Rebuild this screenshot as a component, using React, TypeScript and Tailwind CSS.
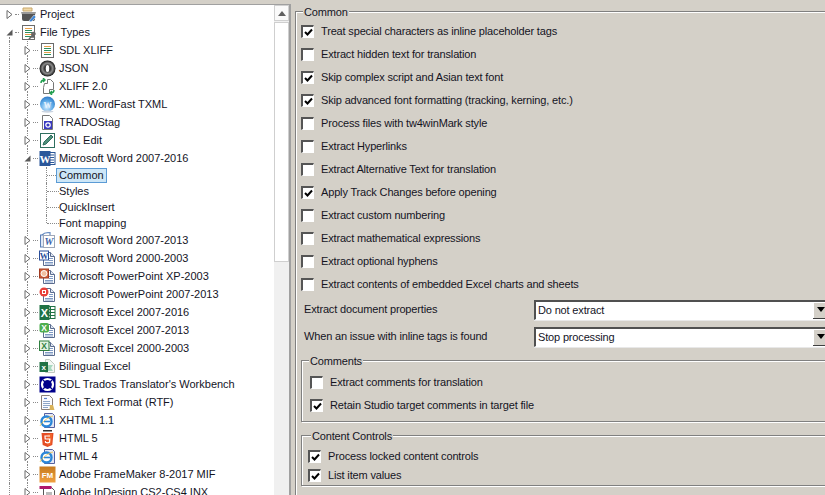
import type { ReactNode } from 'react';

const ink = '#14141f';

function Svg({ children }: { children: ReactNode }) {
  return (
    <svg width="17" height="17" viewBox="0 0 17 17" className="shrink-0">
      {children}
    </svg>
  );
}

// page with a folded corner and some text lines
function Page({ x = 4, lines = '#7f9ac4' }: { x?: number; lines?: string }) {
  return (
    <g>
      <path d={`M${x + 0.5} 2.5h7l4 4v9h-11z`} fill="#fff" stroke="#5b6c8f" />
      <path d={`M${x + 7.5} 2.5v4h4`} fill="#dfe6f2" stroke="#5b6c8f" />
      <path d={`M${x + 6} 8.5h4M${x + 6} 10.5h4M${x + 2} 12.5h8M${x + 2} 14h8`} stroke={lines} />
    </g>
  );
}

function Letter({ x, y, size, fill, children, italic }: { x: number; y: number; size: number; fill: string; children: string; italic?: boolean }) {
  return (
    <text x={x} y={y} fontSize={size} fontWeight="700" fontStyle={italic ? 'italic' : 'normal'} fontFamily="'Liberation Serif', serif" fill={fill} textAnchor="middle">
      {children}
    </text>
  );
}

function ListDoc() {
  return (
    <>
      <rect x="2.5" y="1.5" width="12" height="14" fill="#fff" stroke="#6b6b6b" />
      <path d="M5 4.5h7M5 10.5h7" stroke="#e8a04a" />
      <path d="M5 6.5h7M5 8.5h7M5 12.5h7" stroke="#2f8f5f" />
    </>
  );
}

const icons: Record<string, ReactNode> = {
  project: (
    <>
      <path d="M3 2h9v3H3z" fill="#f0d9a8" stroke="#c9a86a" />
      <path d="M1 6h15l-1 3H2z" fill="#9a9a9a" />
      <path d="M2 8h13v5a2 2 0 0 1-2 2H4a2 2 0 0 1-2-2z" fill="#555" />
      <path d="M9 15l5-6 2 2-5 5z" fill="#3f86d6" stroke="#fff" strokeWidth="0.5" />
    </>
  ),
  types: (
    <>
      <ListDoc />
      <path d="M9 15l4-4M12 9c2-1 3 0 3 1l-2 1 1 2-2 0z" stroke="#666" strokeWidth="1.6" fill="#888" />
    </>
  ),
  xliff: <ListDoc />,
  json: (
    <>
      <defs>
        <radialGradient id="jsonRing" cx="0.5" cy="0.5" r="0.5">
          <stop offset="0.3" stopColor="#222" />
          <stop offset="0.65" stopColor="#8d8d8d" />
          <stop offset="1" stopColor="#111" />
        </radialGradient>
      </defs>
      <circle cx="8.5" cy="8.5" r="8" fill="url(#jsonRing)" />
      <ellipse cx="8.5" cy="8.5" rx="1.8" ry="3.6" fill="#fff" />
    </>
  ),
  xliff2: (
    <>
      <path d="M5.5 5.5h3v-4h3l3 3v7h-4v4h-6v-6z" fill="#fff" stroke="#777" />
      <path d="M2 5c0-2 1-3 3-3M4 0l2 2-2 2M15 12c0 2-1 3-3 3M13 17l-2-2 2-2" stroke="#1f9d4d" strokeWidth="1.4" fill="none" />
    </>
  ),
  globe: (
    <>
      <defs>
        <radialGradient id="globeFill" cx="0.45" cy="0.7" r="0.7">
          <stop offset="0" stopColor="#d8efff" />
          <stop offset="0.6" stopColor="#5aa8e6" />
          <stop offset="1" stopColor="#2e78c4" />
        </radialGradient>
      </defs>
      <circle cx="8.5" cy="8" r="7.5" fill="url(#globeFill)" />
      <ellipse cx="8.5" cy="15.5" rx="6" ry="1.2" fill="#c9d3e0" />
      <Letter x={8.5} y={12} size={8} fill="#e8f4ff">W</Letter>
    </>
  ),
  tag: (
    <>
      <path d="M3.5 1.5h7l3 3v11h-10z" fill="#fff" stroke="#777" />
      <rect x="5" y="7" width="8" height="8" fill="#3a3ac0" />
      <circle cx="9" cy="11" r="2.2" fill="none" stroke="#fff" strokeWidth="1.2" />
    </>
  ),
  edit: (
    <>
      <rect x="1.5" y="1.5" width="14" height="14" fill="#fff" stroke="#2f6f5f" />
      <path d="M4 13l1-3 7-7 2 2-7 7z" fill="#4f8f7a" stroke="#2f6f5f" />
    </>
  ),
  word16: (
    <>
      <rect x="7" y="2.5" width="9" height="12" fill="#fff" stroke="#2b5797" />
      <path d="M10 5h5M10 7.5h5M10 10h5M10 12.5h5" stroke="#2b5797" />
      <rect x="0.5" y="1" width="11" height="15" fill="#2b579a" />
      <Letter x={6} y={12.5} size={11} fill="#fff">W</Letter>
    </>
  ),
  word13: (
    <>
      <path d="M3 3c2-2 5-2.5 8-2.5v3" fill="none" stroke="#6b8fc4" strokeWidth="1.2" />
      <rect x="1.5" y="3" width="3" height="12" fill="#dfe8f6" stroke="#5a7fb8" />
      <rect x="4.5" y="3.5" width="11" height="12" fill="#fff" stroke="#a0a8b8" />
      <Letter x={10} y={13} size={10} fill="#3a5fa8" italic>W</Letter>
    </>
  ),
  word03: (
    <>
      <Page x={4} />
      <rect x="0.5" y="1" width="9" height="9" fill="#fff" stroke="#2b4f9a" />
      <Letter x={5} y={8.5} size={8.5} fill="#2b4f9a">W</Letter>
    </>
  ),
  ppt03: (
    <>
      <Page x={4} />
      <rect x="0.5" y="1" width="9" height="9" fill="#d0603a" stroke="#a03a20" />
      <circle cx="5" cy="5.5" r="3" fill="#f2c0a0" stroke="#fff" />
    </>
  ),
  ppt07: (
    <>
      <Page x={4} />
      <circle cx="5" cy="6" r="4.5" fill="#e8403a" />
      <path d="M3 4h4v4H3z" fill="#fff" />
      <path d="M4 5h2v2H4z" fill="#e8403a" />
    </>
  ),
  excel16: (
    <>
      <rect x="7" y="2.5" width="9" height="12" fill="#fff" stroke="#207245" />
      <path d="M11.5 3v11M7 5.5h9M7 8.5h9M7 11.5h9" stroke="#207245" />
      <rect x="0.5" y="1" width="10" height="15" fill="#207245" />
      <text x="5.5" y="12.5" fontSize="11" fontWeight="700" fontFamily="'Liberation Sans', sans-serif" fill="#fff" textAnchor="middle">X</text>
    </>
  ),
  excel07: (
    <>
      <Page x={4} />
      <rect x="0.5" y="1" width="9.5" height="9.5" rx="2" fill="#4fae4f" />
      <text x="5.2" y="9" fontSize="8.5" fontWeight="700" fontFamily="'Liberation Sans', sans-serif" fill="#fff" textAnchor="middle">X</text>
    </>
  ),
  excel03: (
    <>
      <Page x={4} />
      <rect x="0.5" y="1" width="9.5" height="9.5" fill="#e4f2e0" stroke="#2f7f3f" />
      <text x="5.2" y="9" fontSize="8.5" fontWeight="700" fontFamily="'Liberation Sans', sans-serif" fill="#2f7f3f" textAnchor="middle">X</text>
    </>
  ),
  bilingual: (
    <>
      <path d="M6.5 1.5h4l5 5v8h-9z" fill="#f4f7f4" stroke="#c0c8c0" />
      <path d="M9 7h5l-2 3 2 3H9z" fill="#a8d8c0" />
      <rect x="0.5" y="4" width="8.5" height="10" fill="#207245" />
      <text x="4.7" y="12" fontSize="8" fontWeight="700" fontFamily="'Liberation Sans', sans-serif" fill="#fff" textAnchor="middle">x</text>
    </>
  ),
  workbench: (
    <>
      <rect x="0.5" y="0.5" width="16" height="16" fill="#00008b" />
      <circle cx="8.5" cy="8.5" r="5.5" fill="none" stroke="#fff" strokeWidth="2.2" />
      <path d="M4 4l3 3M13 4l-3 3M4 13l3-3M13 13l-3-3" stroke="#00008b" strokeWidth="1.4" />
    </>
  ),
  rtf: (
    <>
      <path d="M2.5 1.5h8l3 3v11h-11z" fill="#fbfbff" stroke="#8a7f78" />
      <path d="M5 4.5h3" stroke="#5a7fc8" strokeWidth="1.2" />
      <path d="M4 7.5h7M4 9.5h7M4 11.5h7M4 13.5h5" stroke="#8fa6c8" />
      <path d="M11 11l3 0 1.5 5h-5z" fill="#d9b25a" />
    </>
  ),
  ie: (
    <>
      <path d="M5.5 1.5h8l2 2v12h-10z" fill="#e4e7f4" stroke="#5560a0" />
      <circle cx="7.5" cy="9.5" r="5" fill="#fff" stroke="#2a86d8" strokeWidth="2.4" />
      <path d="M5 9.5h6" stroke="#2a86d8" strokeWidth="1.6" />
      <path d="M1 14c2-4 8-9 13-10" stroke="#f0c040" strokeWidth="0.8" fill="none" />
    </>
  ),
  html5: (
    <>
      <path d="M4 0h9v1.5H4z" fill="#333" />
      <path d="M2.5 3h12l-1.2 12-4.8 2-4.8-2z" fill="#e44d26" />
      <path d="M8.5 4v11.5l3.6-1.3 1-10.2z" fill="#f16529" />
      <path d="M11 6H6l.2 3h4.6l-.3 3.2-2 .7-2-.7-.1-1.2" fill="none" stroke="#fff" strokeWidth="1.2" />
    </>
  ),
  fm: (
    <>
      <defs>
        <linearGradient id="fmFill" x1="0" y1="0" x2="0" y2="1">
          <stop offset="0" stopColor="#c67a1e" />
          <stop offset="1" stopColor="#f0a040" />
        </linearGradient>
      </defs>
      <rect x="0.5" y="0.5" width="16" height="16" fill="url(#fmFill)" />
      <text x="8.5" y="12" fontSize="8" fontWeight="700" fontFamily="'Liberation Sans', sans-serif" fill="#fff" textAnchor="middle">FM</text>
    </>
  ),
  indesign: (
    <>
      <path d="M4.5 3.5h8l3 3v10h-11z" fill="#fff" stroke="#555" />
      <path d="M7 9h6M7 11h6M7 13h6" stroke="#777" />
      <rect x="0.5" y="2" width="12" height="3" fill="#b0186c" />
    </>
  ),
};

type Row = { label: string; icon?: string; depth: 0 | 1 | 2; open?: boolean; selected?: boolean; last?: boolean };

const rows: Row[] = [
  { label: 'Project', icon: 'project', depth: 0 },
  { label: 'File Types', icon: 'types', depth: 0, open: true },
  { label: 'SDL XLIFF', icon: 'xliff', depth: 1 },
  { label: 'JSON', icon: 'json', depth: 1 },
  { label: 'XLIFF 2.0', icon: 'xliff2', depth: 1 },
  { label: 'XML: WordFast TXML', icon: 'globe', depth: 1 },
  { label: 'TRADOStag', icon: 'tag', depth: 1 },
  { label: 'SDL Edit', icon: 'edit', depth: 1 },
  { label: 'Microsoft Word 2007-2016', icon: 'word16', depth: 1, open: true },
  { label: 'Common', depth: 2, selected: true },
  { label: 'Styles', depth: 2 },
  { label: 'QuickInsert', depth: 2 },
  { label: 'Font mapping', depth: 2, last: true },
  { label: 'Microsoft Word 2007-2013', icon: 'word13', depth: 1 },
  { label: 'Microsoft Word 2000-2003', icon: 'word03', depth: 1 },
  { label: 'Microsoft PowerPoint XP-2003', icon: 'ppt03', depth: 1 },
  { label: 'Microsoft PowerPoint 2007-2013', icon: 'ppt07', depth: 1 },
  { label: 'Microsoft Excel 2007-2016', icon: 'excel16', depth: 1 },
  { label: 'Microsoft Excel 2007-2013', icon: 'excel07', depth: 1 },
  { label: 'Microsoft Excel 2000-2003', icon: 'excel03', depth: 1 },
  { label: 'Bilingual Excel', icon: 'bilingual', depth: 1 },
  { label: "SDL Trados Translator's Workbench", icon: 'workbench', depth: 1 },
  { label: 'Rich Text Format (RTF)', icon: 'rtf', depth: 1 },
  { label: 'XHTML 1.1', icon: 'ie', depth: 1 },
  { label: 'HTML 5', icon: 'html5', depth: 1 },
  { label: 'HTML 4', icon: 'ie', depth: 1 },
  { label: 'Adobe FrameMaker 8-2017 MIF', icon: 'fm', depth: 1 },
  { label: 'Adobe InDesign CS2-CS4 INX', icon: 'indesign', depth: 1 },
];

function Guide() {
  return <span className="w-px shrink-0 self-stretch border-l border-dotted border-[#8a8a8a]" />;
}

function Dash({ width }: { width: string }) {
  return <span className={`shrink-0 border-t border-dotted border-[#8a8a8a] ${width}`} />;
}

function Arrow({ open }: { open?: boolean }) {
  return (
    <svg width="7" height="9" viewBox="0 0 7 9" className="shrink-0">
      {open ? <path d="M6.5 1.5v6h-6z" fill="#595959" /> : <path d="M1 .5l5 4-5 4z" fill="#fff" stroke="#6a6a6a" />}
    </svg>
  );
}

function Expander({ open, top }: { open?: boolean; top?: boolean }) {
  return (
    <span className="flex w-[7px] shrink-0 flex-col items-center self-stretch">
      <span className={`w-px flex-1 ${top ? '' : 'border-l border-dotted border-[#8a8a8a]'}`} />
      <Arrow open={open} />
      <span className={`w-px flex-1 ${top && !open ? '' : 'border-l border-dotted border-[#8a8a8a]'}`} />
    </span>
  );
}

function TreeRow({ row }: { row: Row }) {
  if (row.depth === 2) {
    return (
      <div className="flex h-4 items-center pl-[9px]">
        <Guide />
        <span className="w-[17px] shrink-0" />
        <Guide />
        <span className="w-[18px] shrink-0" />
        <span className="flex shrink-0 items-center self-stretch">
          {row.last ? (
            <span className="flex flex-col self-stretch">
              <span className="h-2 border-l border-dotted border-[#8a8a8a]" />
              <span className="h-2" />
            </span>
          ) : (
            <Guide />
          )}
          <Dash width={row.selected ? 'w-[9px]' : 'w-[12px]'} />
        </span>
        <span
          className={
            row.selected
              ? 'flex h-[15px] w-[51px] items-center border border-[#5b9bd5] bg-[#cde6f7] pl-[2px]'
              : 'flex items-center'
          }
        >
          {row.label}
        </span>
      </div>
    );
  }
  if (row.depth === 1) {
    return (
      <div className="flex h-[18px] items-center pl-[9px]">
        <Guide />
        <span className="w-[14px] shrink-0" />
        <Expander open={row.open} />
        <span className="w-[2px] shrink-0" />
        <Dash width="w-[5px]" />
        <span className="w-[1px] shrink-0" />
        <Svg>{icons[row.icon!]}</Svg>
        <span className="ml-[3px] whitespace-nowrap">{row.label}</span>
      </div>
    );
  }
  return (
    <div className="flex h-[18px] items-center pl-[6px]">
      <Expander open={row.open} top />
      <span className="w-[2px] shrink-0" />
      <Dash width="w-[4px]" />
      <span className="w-[1px] shrink-0" />
      <Svg>{icons[row.icon!]}</Svg>
      <span className="ml-[3px] whitespace-nowrap">{row.label}</span>
    </div>
  );
}

function Scrollbar() {
  return (
    <div className="flex w-[15px] shrink-0 flex-col bg-[#f0f0f0]">
      <div className="flex h-[16px] items-center justify-center border border-[#d0d0d0] bg-[#fafafa]">
        <svg width="8" height="5" viewBox="0 0 8 5">
          <path d="M4 0l4 5H0z" fill="#606060" />
        </svg>
      </div>
      <div className="mt-px h-[240px] border border-[#cfcfcf] bg-white" />
    </div>
  );
}

function CheckBox({ checked }: { checked?: boolean }) {
  return (
    <span className="flex h-[13px] w-[13px] shrink-0 items-center justify-center border-t-2 border-r border-b border-l-2 border-t-[#555] border-r-white border-b-white border-l-[#555] bg-white">
      {checked && (
        <svg width="9" height="9" viewBox="0 0 9 9">
          <path d="M1 4l2.5 2.5L8 1.5" fill="none" stroke="#000" strokeWidth="2" />
        </svg>
      )}
    </span>
  );
}

function Check({ label, checked, height = 'h-[23px]' }: { label: string; checked?: boolean; height?: string }) {
  return (
    <div className={`flex items-center gap-[7px] ${height}`}>
      <CheckBox checked={checked} />
      <span className="whitespace-nowrap">{label}</span>
    </div>
  );
}

function Group({ title, className, titleClass, children }: { title: string; className: string; titleClass: string; children: ReactNode }) {
  return (
    <div className={`border border-[#808080] shadow-[inset_1px_1px_0_#fff,1px_1px_0_#fff] ${className}`}>
      <div className={`-mt-[7px] h-[14px] w-fit bg-[#d4d0c8] px-[1px] leading-[14px] ${titleClass}`}>{title}</div>
      {children}
    </div>
  );
}

function Combo({ value }: { value: string }) {
  return (
    <div className="flex h-[20px] w-[296px] border-t-2 border-r border-b border-l-2 border-t-[#505050] border-r-white border-b-white border-l-[#505050] bg-white shadow-[0_1px_0_#e8e8e8]">
      <span className="flex-1 pl-[2px] leading-[17px]">{value}</span>
      <span className="flex w-[16px] items-center justify-center border-r border-b border-[#404040] bg-[#d4d0c8] shadow-[inset_1px_1px_0_#fff]">
        <svg width="8" height="5" viewBox="0 0 8 5">
          <path d="M0 0h8L4 5z" fill="#000" />
        </svg>
      </span>
    </div>
  );
}

const common: [string, boolean][] = [
  ['Treat special characters as inline placeholder tags', true],
  ['Extract hidden text for translation', false],
  ['Skip complex script and Asian text font', true],
  ['Skip advanced font formatting (tracking, kerning, etc.)', true],
  ['Process files with tw4winMark style', false],
  ['Extract Hyperlinks', false],
  ['Extract Alternative Text for translation', false],
  ['Apply Track Changes before opening', true],
  ['Extract custom numbering', false],
  ['Extract mathematical expressions', false],
  ['Extract optional hyphens', false],
  ['Extract contents of embedded Excel charts and sheets', false],
];

export default function App() {
  return (
    <div
      className="flex h-[495px] w-[825px] overflow-hidden bg-[#d4d0c8] text-[11px] leading-none"
      style={{ fontFamily: "'Liberation Sans', Arial, sans-serif", color: ink }}
    >
      {/* tree side */}
      <div className="flex h-[495px] w-[291px] shrink-0 flex-col pt-[4px]">
        <div className="flex min-h-0 flex-1 border-t border-r-2 border-[#a0a0a0] bg-white">
          <div className="min-w-0 flex-1 overflow-hidden">
            {rows.map((row) => (
              <TreeRow key={row.label + row.icon} row={row} />
            ))}
          </div>
          <Scrollbar />
        </div>
      </div>

      {/* options side */}
      <div className="min-w-0 flex-1 overflow-hidden pl-[4px] pt-[11px] tracking-[-0.16px]">
        <Group title="Common" titleClass="ml-[7px]" className="h-[520px] w-[600px]">
          <div className="pl-[5px] pt-px">
            {common.map(([label, checked]) => (
              <Check key={label} label={label} checked={checked} />
            ))}
          </div>
          <div className="flex h-[27px] items-center pl-[8px]">
            <span className="w-[230px]">Extract document properties</span>
            <Combo value="Do not extract" />
          </div>
          <div className="flex h-[27px] items-center pl-[8px]">
            <span className="w-[230px]">When an issue with inline tags is found</span>
            <Combo value="Stop processing" />
          </div>
          <Group title="Comments" titleClass="ml-[7px]" className="ml-[5px] mt-[10px] h-[62px] w-[590px]">
            <div className="pl-[8px] pt-[3px]">
              <Check label="Extract comments for translation" />
              <Check label="Retain Studio target comments in target file" checked />
            </div>
          </Group>
          <Group title="Content Controls" titleClass="ml-[9px]" className="ml-[5px] mt-[13px] h-[51px] w-[590px]">
            <div className="pl-[6px] pt-[4px]">
              <Check label="Process locked content controls" height="h-[19px]" checked />
              <Check label="List item values" height="h-[19px]" checked />
            </div>
          </Group>
        </Group>
      </div>
    </div>
  );
}
